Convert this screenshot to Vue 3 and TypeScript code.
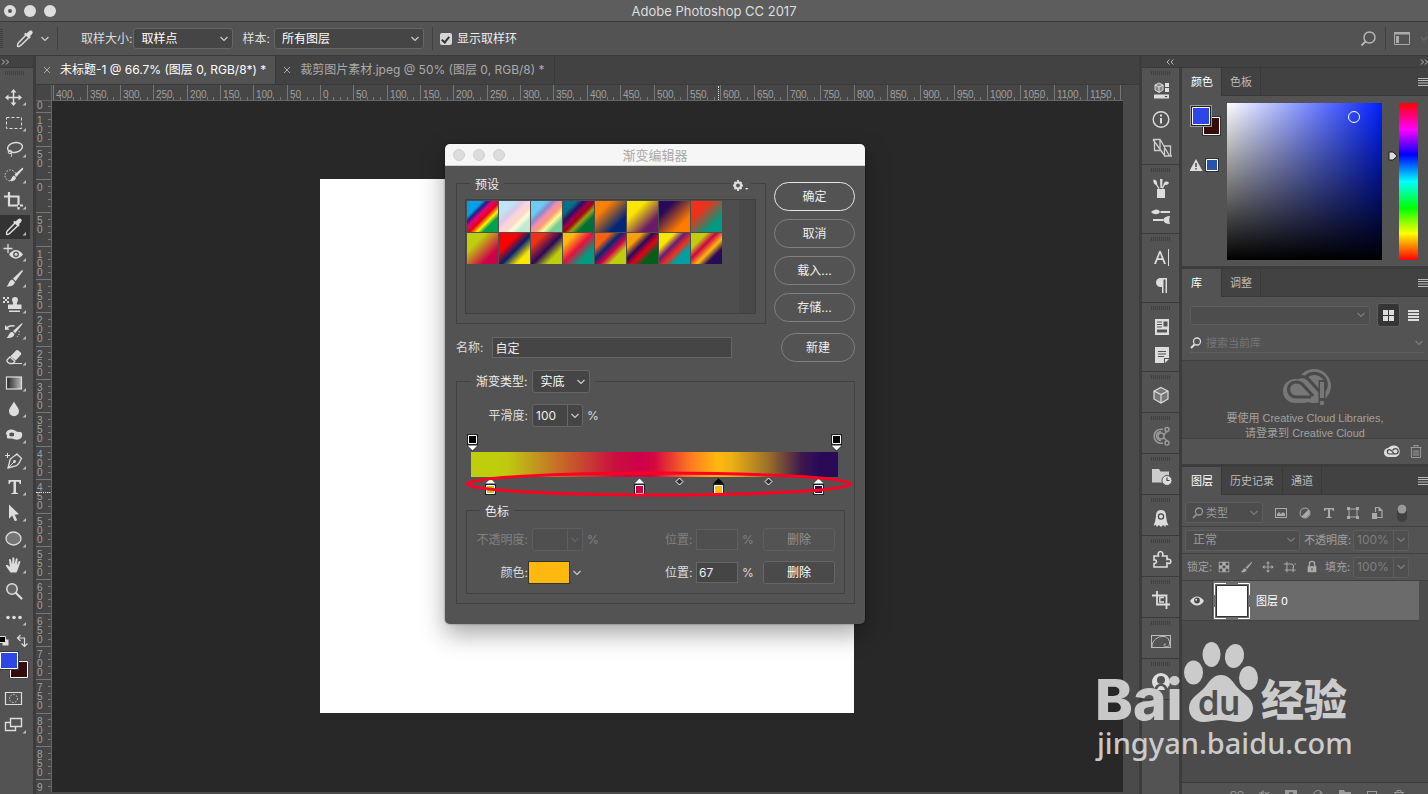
<script setup lang="ts">
import { ref } from 'vue'

interface Tick {
  value: number
  offset: number
  label: string
}

const SCALE = 0.667

function buildTicks(from: number, to: number): Tick[] {
  const ticks: Tick[] = []
  for (let v = from; v <= to; v += 10) {
    ticks.push({
      value: v,
      offset: Math.round(v * SCALE),
      label: v % 50 === 0 ? String(Math.abs(v)) : '',
    })
  }
  return ticks
}

const columns = buildTicks(-400, 1200)
const rows = buildTicks(-150, 920)

const brush =
  '<path d="M21.8 4.2L13 12.6l2.6 2.6 7-9.8c.5-.8-.1-1.7-.8-1.2z" fill="#ddd"/><path d="M12.2 13.4l2.7 2.7c-.4 3-3.700 5-8.500 4.200 2.800-1.500 2-6 5.800-6.900z" fill="#ddd"/>'

const tools: { id: string; name: string; art: string; flyout: boolean }[] = [
  { id: 'move', name: '移动工具', flyout: true, art: '<path d="M13.500 7v13M7 13.500h13" stroke="#ddd" stroke-width="1.500"/><path d="M13.500 5l3 3.500h-6zM13.500 22l3-3.500h-6zM5 13.500l3.500-3v6zM22 13.500l-3.500-3v6z" fill="#ddd"/>' },
  { id: 'marquee', name: '矩形选框工具', flyout: true, art: '<rect x="6.500" y="7.500" width="15" height="11" fill="none" stroke="#ddd" stroke-dasharray="3 2"/>' },
  { id: 'lasso', name: '套索工具', flyout: true, art: '<ellipse cx="15" cy="11.500" rx="7.500" ry="4.800" transform="rotate(-12 15 11.500)" fill="none" stroke="#ddd" stroke-width="1.400"/><circle cx="10" cy="16" r="1.800" fill="none" stroke="#ddd"/><path d="M11 17c1 1 1 2 0 4" fill="none" stroke="#ddd"/>' },
  { id: 'quick', name: '快速选择工具', flyout: true, art: '<circle cx="10.500" cy="13.500" r="5.500" fill="none" stroke="#ddd" stroke-dasharray="1.500 1.500"/><path d="M22 6l-7.500 6.500 2 2.200 6.500-7.500c.5-.8-.3-1.700-1-1.200z" fill="#ddd"/><path d="M14 13.500l2.200 2.400c-1 2.600-3.700 3.500-6.700 2.900 2.500-1.300 2-4.500 4.500-5.300z" fill="#ddd"/>' },
  { id: 'crop', name: '裁剪工具', flyout: true, art: '<path d="M4 8.500h14.500V17M9 4v13.500h9M20 17.500h3M18.500 19v2.500" fill="none" stroke="#ddd" stroke-width="2.200"/>' },
  { id: 'eyedropper', name: '吸管工具', flyout: true, art: '<path d="M15 9l-7.500 7.800c-1 1.100-1.200 2.700-.9 3.500.8.300 2.300 0 3.300-1L17.500 12" fill="none" stroke="#ddd" stroke-width="1.500"/><path d="M13 8l1.700-1.300 1 .8c2-2.300 3.300-3.800 5-2.800s1.200 3.200-1.700 5.300l.8 1-1.600 1.800z" fill="#ddd"/>' },
  { id: 'redeye', name: '红眼工具', flyout: true, art: '<path d="M8 4v9M3.500 8.500h9" stroke="#ddd" stroke-width="1.300"/><path d="M9 14.500c3.500-6 10-6 14 0-4 5.500-10.500 5.500-14 0z" fill="#ddd"/><circle cx="16" cy="14.300" r="2.900" fill="#535353"/><circle cx="16" cy="14.300" r="1.500" fill="#ddd"/>' },
  { id: 'brush', name: '画笔工具', flyout: true, art: brush },
  { id: 'stamp', name: '仿制图章工具', flyout: true, art: '<path d="M3 5h2v2H3zM7 5h2v2H7zM5 7h2v2H5zM3 9h2v2H3zM7 9h2v2H7z" fill="#ddd"/><path d="M12 8a3 3 0 116 0c0 1.600-1.500 2.500-1 4.500h4.500V17H8v-4.500h5c.5-2-1-2.900-1-4.500zM9 18.500h11v1.600H9z" fill="#ddd"/>' },
  { id: 'history', name: '历史记录画笔', flyout: true, art: '<path d="M21.800 5.200L13 13l2.200 2.200 7-8.800c.5-.8.200-1.700-.4-1.200z" fill="#ddd"/><path d="M12.200 13.800l2.300 2.300c-.4 2.800-3.700 4.500-8 3.900 2.500-1.400 2-5.400 5.700-6.200z" fill="#ddd"/><path d="M6 11c2.500-4 6-3.500 8.500-3" fill="none" stroke="#ddd" stroke-width="1.500"/><path d="M5 12V7l4.500 4.500z" fill="#ddd"/><path d="M19 13c1 3-.5 5-3 6.500" fill="none" stroke="#ddd" stroke-dasharray="1.200 1.600"/>' },
  { id: 'eraser', name: '橡皮擦工具', flyout: true, art: '<path d="M7 16l3-3 4.800 4.300-1.800 2.200H9.500c-1.500-.8-3-2-2.500-3.500z" fill="none" stroke="#ddd" stroke-width="1.300"/><path d="M10.500 12.200l5.500-5.700c.8-.7 1.600-.7 2.400 0l2.300 2c.7.700.7 1.600 0 2.400l-5 5.700z" fill="#ddd"/><path d="M11 19.500h11" stroke="#ddd"/>' },
  { id: 'gradient', name: '渐变工具', flyout: true, art: '<defs><linearGradient id="toolGrad"><stop offset="0" stop-color="#222"/><stop offset="1" stop-color="#bbb"/></linearGradient></defs><rect x="6.500" y="7" width="15" height="12" fill="url(#toolGrad)" stroke="#ddd" stroke-width="1.200"/>' },
  { id: 'blur', name: '模糊工具', flyout: true, art: '<path d="M14 5.500c2 4 5 6.500 5 9.700a5 5 0 01-10 0c0-3.200 3-5.700 5-9.700z" fill="#ddd"/>' },
  { id: 'dodge', name: '海绵工具', flyout: true, art: '<path d="M6 12c0-4 5-5.500 9-3.500l2 1.200 4 .3c2 1.500 1.500 5.500-.8 6.800-3 1.700-5.700.7-8.200-.3-2.500-.3-4 .5-5-.8-.7-1 .5-1.500 0-2.500z" fill="#ddd"/><path d="M9.500 12.500a2.300 1.600 0 104.500 0 2.300 1.600 0 10-4.500 0z" fill="#535353"/>' },
  { id: 'pen', name: '钢笔工具', flyout: true, art: '<path d="M7.500 5v5M5 7.500h5" stroke="#ddd"/><path d="M17 6l4.500 4.500c-1.500 1.500-1.300 5.500-5 7.200L8 20l2-8c1.500-3.500 5.500-4 7-6z" fill="none" stroke="#ddd" stroke-width="1.300"/><path d="M8 20l6-6" stroke="#ddd"/><circle cx="14.500" cy="13.500" r="1.400" fill="#ddd"/>' },
  { id: 'type', name: '文字工具', flyout: true, art: '<path d="M8.500 6h12.500v4h-1.200c-.3-1.800-1-2.300-3-2.300h-.8v10c0 1 .5 1.200 2 1.300v1H11.500v-1c1.500-.1 2-.3 2-1.300v-10h-.8c-2 0-2.700.5-3 2.300H8.500z" fill="#ddd"/>' },
  { id: 'path', name: '路径选择工具', flyout: true, art: '<path d="M9 4.500v14.300l3.200-3.200 2.600 5.700 2.400-1.100-2.500-5.500 4.300-.4z" fill="#ddd"/>' },
  { id: 'ellipse', name: '椭圆工具', flyout: true, art: '<ellipse cx="13.500" cy="12.500" rx="7.500" ry="6.500" fill="#767676" stroke="#ddd" stroke-width="1.300"/>' },
  { id: 'hand', name: '抓手工具', flyout: true, art: '<path d="M10.500 20.500L6 14.200c-.6-1 .6-2 1.600-1.200l2.300 2-.9-7c-.1-1.300 1.600-1.500 1.900-.3l1.200 4.800.3-6.200c0-1.300 1.800-1.300 1.900 0l.2 6.200 1.300-5.400c.3-1.200 2-.9 1.800.4l-.7 5.500 1.700-3.500c.6-1.100 2.100-.4 1.700.8l-2.300 6.700c-.5 1.600-1 2.500-1.600 3.500z" fill="#ddd"/>' },
  { id: 'zoom', name: '缩放工具', flyout: false, art: '<circle cx="12" cy="11" r="5.200" fill="#666" stroke="#ddd" stroke-width="1.500"/><path d="M16 15l5.500 5.500" stroke="#ddd" stroke-width="2.200" stroke-linecap="round"/>' },
  { id: 'more', name: '编辑工具栏', flyout: true, art: '<circle cx="8" cy="13.500" r="1.800" fill="#ddd"/><circle cx="14" cy="13.500" r="1.800" fill="#ddd"/><circle cx="20" cy="13.500" r="1.800" fill="#ddd"/>' },
]

const dock: { name: string; art: string }[][] = [
  [
    { name: '属性', art: '<path d="M9 5l4 2v5l-4 2.500L5 12V7z" fill="#888" stroke="#ddd"/><path d="M5 7l4 2 4-2M9 9v5" fill="none" stroke="#ddd"/><path d="M15 5h4v4h-4zM15 10h4v4h-4zM4 16.500h15v4H4z" fill="#ddd"/><path d="M14.500 18h3l-1.500 1.500z" fill="#333"/>' },
    { name: '信息', art: '<circle cx="11" cy="13.500" r="7.800" fill="none" stroke="#ddd" stroke-width="1.400"/><path d="M11 8.500v2M11 12V17.500" stroke="#ddd" stroke-width="2"/>' },
    { name: '仿制源', art: '<path d="M3 5.500h7v11H4.500V6M10.500 6l9 16H22M14.500 12h6v10h-6zM3 5.500l11.500 16" fill="none" stroke="#ccc" stroke-width="1.300"/>' },
  ],
  [
    { name: '画笔预设', art: '<path d="M7 14h8v9H7zM10 4h2.500l-.3 9h-1.800zM3.500 4.500c3 0 4 3 3.700 5l2.500 4-1.200.5-2.500-4C3.500 9 3 7 3.500 4.500zM14 8c1.500-2.500 4-1.500 5-.3-1 2-2.500 2.500-4 2l-2 4-1-.5z" fill="#ddd"/>' },
    { name: '画笔', art: '<path d="M1 9c3-2.500 7-4 9 0-2 3-6 3-9 0zM10.500 8H20v2H10.500zM3 16h10v2H3zM13 17c1.500-3 3.500-4 7-4-1 3-1 5 0 8-3.500 0-5.500-1-7-4z" fill="#ddd"/>' },
  ],
  [
    { name: '字符', art: '<path d="M4 20l5.300-13h1.400L16 20h-2l-1.500-4h-5L6 20zm4.200-5.700h3.600L10 9.500zM18 5h1v17h-1z" fill="#ddd"/>' },
    { name: '段落', art: '<path d="M10 6h7v15h-1.500V7.500H13.500V21H12v-6h-1.500a4.500 4.500 0 010-9z" fill="#ddd"/>' },
  ],
  [
    { name: '动作', art: '<path d="M5 6h14v16H5z" fill="#ddd"/><path d="M7 9h5M7 11.500h5M7 14h5" stroke="#535353"/><path d="M13.500 8.500h4v5h-4zM7 16.500h10v3H7z" fill="#535353"/>' },
    { name: '注释', art: '<path d="M5 6h14v11h-5v5H5z" fill="#ddd"/><path d="M15 22v-4h4z" fill="#ddd"/><path d="M8 10.500h8M8 13h8M8 15.500h6" stroke="#535353"/>' },
  ],
  [{ name: '3D', art: '<path d="M11 5.500l7 3.500v8l-7 4-7-4V9z" fill="#777" stroke="#ddd" stroke-width="1.200"/><path d="M4 9l7 3.500L18 9M11 12.500V21" fill="none" stroke="#ddd" stroke-width="1.200"/>' }],
  [{ name: '共享', art: '<g fill="none" stroke="#9a9a9a" stroke-width="1.500"><path d="M13 6.500a7 7 0 100 13.500"/><circle cx="11" cy="13" r="3"/><path d="M11 8.500a4.500 4.500 0 100 9M13.500 12l4-4M13.500 14.500l4 4"/><circle cx="17" cy="6.500" r="2"/><circle cx="17" cy="20" r="2"/></g>' }],
  [{ name: '文件', art: '<path d="M2 5h7l1.500 2.500H19v11H2z" fill="#ccc"/><circle cx="17" cy="16.500" r="5" fill="#ddd" stroke="#535353"/><path d="M17 13.500v3h2.500" fill="none" stroke="#444" stroke-width="1.200"/>' }],
  [{ name: '图案', art: '<path d="M11 5c4 0 5 3 5 6l1 6 1.500 3.500-2.500-.5-.8 2-2-2-2.200 2-2.200-2-2 2-.8-2-2.500.5L5 17l1-6c0-3 1-6 5-6z" fill="#ddd"/><circle cx="11" cy="11.500" r="2.600" fill="none" stroke="#444" stroke-width="1.200"/>' }],
  [{ name: '扩展', art: '<path d="M4 10h4.500c-1-3 .5-4.500 2-4.500s3 1.500 2 4.500H17v3.500c3-.8 3.800.5 3.800 2s-1 2.500-3.800 1.500V21H4v-3.500c3.500.5 3-4.500 0-3.500z" fill="none" stroke="#ddd" stroke-width="1.600"/>' }],
  [{ name: '裁切', art: '<path d="M2 8.500h14.500V22M7 4v13.500h13" fill="none" stroke="#ddd" stroke-width="1.800"/><path d="M14 10.500H9.800v4.500H14M13.500 12v0" fill="none" stroke="#ddd" stroke-width="1.400"/>' }],
  [{ name: '黄金分割', art: '<rect x="1.500" y="7.500" width="19" height="12" fill="none" stroke="#bbb"/><path d="M2 19C2 12 8 8 14 8.500c5 .5 6.500 6 5 9-1.500 2-5 1.500-5-.5 0-1.200 1.500-1.200 2-.5" fill="none" stroke="#bbb"/>' }],
  [{ name: '用户', art: '<circle cx="11" cy="13" r="9" fill="#ddd"/><circle cx="11" cy="11" r="4" fill="#535353"/><path d="M4.500 20c1-4 3-5 6.500-5s5.500 1 6.500 5l-3 2.500h-7z" fill="#535353"/><path d="M7 21c1-3 2-4 4-4s3 1 4 4z" fill="#ddd"/>' }],
]

const presets: string[] = [
  '#00a0e9 25%, #1d2088 33%, #e4007f 42%, #e60012 54%, #fff100 66%, #00a050 76%',
  '#bfe4f5 25%, #d9c9e6 38%, #fbd3df 48%, #fbd9c5 60%, #fbfbdc 68%, #c3e8d2 80%',
  '#6ccaf5 25%, #8c8ac8 36%, #f48cb5 46%, #f8a070 57%, #fdfa96 68%, #78cc96 80%',
  '#006f87 22%, #2a1060 34%, #9b0050 44%, #a40010 52%, #94a010 62%, #006f38 74%',
  '#ff8000 25%, #002878 75%',
  '#fae600 30%, #6a1a68 75%',
  '#290a59 25%, #ff7c00 75%',
  '#f03018 30%, #009b80 75%',
  '#bece0c 30%, #cf004a 75%',
  '#ff0000 32%, #042070 54%, #fae600 78%',
  '#f03018 22%, #290a59 52%, #bece0c 76%',
  '#ffb80e 20%, #e8103e 48%, #009b80 74%',
  '#fb6010 24%, #042878 42%, #cf004a 58%, #bece0c 74%',
  '#ffa000 24%, #290a59 42%, #e6001a 58%, #00601a 74%',
  '#fae600 25%, #6a1a78 42%, #f03018 58%, #00a0a0 72%',
  '#bece0c 25%, #cf004a 41%, #ffb80e 59%, #290a59 75%',
]

const stops = [
  { x: 34.5, color: '#bece0c', cap: '#fff' },
  { x: 183.5, color: '#cf004a', cap: '#fff' },
  { x: 262.5, color: '#ffb80e', cap: '#000' },
  { x: 362.5, color: '#290a59', cap: '#fff' },
]

const filters: { name: string; art: string }[] = [
  { name: '像素图层', art: '<rect x="2.500" y="3.500" width="11" height="9" fill="none" stroke="#aaa"/><path d="M4 11V9l2-2 2 2 2-2 2 2v2z" fill="#aaa"/>' },
  { name: '调整图层', art: '<circle cx="8" cy="8" r="5" fill="none" stroke="#aaa"/><path d="M4.500 11.500a5 5 0 007-7z" fill="#aaa"/>' },
  { name: '文字图层', art: '<path d="M3 3h10v3h-1c-.2-1-.7-1.500-2-1.500H9V11c0 .8.4 1 1.500 1v1h-5v-1C6.600 12 7 11.800 7 11V4.500H6c-1.300 0-1.800.5-2 1.500H3z" fill="#aaa"/>' },
  { name: '形状图层', art: '<path d="M4 4h8v8H4z" fill="none" stroke="#aaa"/><path d="M2 2h3v3H2zM11 2h3v3h-3zM2 11h3v3H2zM11 11h3v3h-3z" fill="#aaa"/>' },
  { name: '智能对象', art: '<path d="M6.500 7V2.500H10l3 3v7H8" fill="none" stroke="#aaa" stroke-width="1.200"/><path d="M3 8h5v6H3zM9.500 2v4H13z" fill="#aaa"/>' },
]

const locks: { name: string; art: string }[] = [
  { name: '锁定透明像素', art: '<path d="M2 2h12v12H2z" fill="#aaa"/><path d="M3 3h3v3H3zM10 3h3v3h-3zM6.500 6.500h3v3h-3zM3 10h3v3H3zM10 10h3v3h-3z" fill="#4c4c4c"/>' },
  { name: '锁定图像像素', art: '<path d="M14.500 2L7.500 8.500l1.800 1.800L14.800 3c.3-.6 0-1.200-.3-1zM6.800 9.300l1.900 1.900c-.3 2.200-3 3.300-6.700 2.800 2-1.200 2-4 4.800-4.700z" fill="#aaa"/>' },
  { name: '锁定位置', art: '<path d="M8 3v10M3 8h10" stroke="#aaa"/><path d="M8 1.500L10.200 4H5.800zM8 14.500l2.200-2.500H5.800zM1.500 8L4 5.800v4.400zM14.500 8L12 5.800v4.400z" fill="#aaa"/>' },
  { name: '防止嵌套', art: '<path d="M1 4.500h9M4.500 2v12M2 11.500h12.500M11.500 8v6M10 4.500l2 2V9M13 4.500h2" fill="none" stroke="#aaa" stroke-width="1.200"/>' },
  { name: '锁定全部', art: '<path d="M3 7h10v7H3z" fill="#aaa"/><path d="M5 7V4.500a3 3 0 016 0V7" fill="none" stroke="#aaa" stroke-width="1.500"/><path d="M7.500 9h1v3h-1z" fill="#4c4c4c"/>' },
]

const layerActions: { name: string; art: string }[] = [
  { name: '链接图层', art: '<path d="M2 5.500a2.500 2 0 015 0M9 5.500a2.500 2 0 015 0M5 6.500h6" fill="none" stroke="#999" stroke-width="1.200"/>' },
  { name: '图层样式', art: '<path d="M4 10c1 0 1-6 3.500-7.500M3 5h5M9 4l4 5M13 4l-4 5" fill="none" stroke="#999" stroke-width="1.200"/>' },
  { name: '添加蒙版', art: '<path d="M2 2h12v9H2z" fill="#999"/><circle cx="8" cy="6.500" r="2.500" fill="#535353"/>' },
  { name: '新建调整图层', art: '<circle cx="8" cy="7" r="4.500" fill="none" stroke="#999"/><path d="M5 10l6.500-6.500V9L8 11z" fill="#999"/>' },
  { name: '新建组', art: '<path d="M2 2h5l1 2h6v8H2z" fill="#999"/>' },
  { name: '新建图层', art: '<rect x="3.500" y="3.500" width="9" height="9" fill="none" stroke="#999"/>' },
  { name: '删除图层', art: '<path d="M3 4.500h10M6 4V2.500h4V4M4.500 5v8h7V5M6.500 7v5M9.500 7v5" fill="none" stroke="#999"/>' },
]

const gradientName = ref('自定')
const smoothness = ref('100')
const stopPosition = ref('67')
const opacityPosition = ref('')
const stopOpacity = ref('')
const librarySearch = ref('')
const layerOpacity = ref('100%')
const layerFill = ref('100%')
const showRing = ref(true)
</script>

<template>
  <div class="app">
    <header class="titlebar">
      <span class="lights"><i class="light edited"></i><i class="light"></i><i class="light"></i></span>
      <span class="app-title">Adobe Photoshop CC 2017</span>
    </header>

    <div class="options">
      <span class="bar-grip"></span>
      <button class="plain current-tool" aria-label="吸管工具">
        <svg width="22" height="22" viewBox="3 2 22 22" v-html="tools[5].art"></svg>
        <svg class="chev" width="10" height="6" viewBox="0 0 10 6"><path d="M1.500 1L5 4.500 8.500 1" /></svg>
      </button>
      <span class="rule"></span>
      <label class="opt-label first" for="sample-size">取样大小:</label>
      <span class="select size">
        <select id="sample-size"><option>取样点</option></select>
        <svg class="chev" width="10" height="6" viewBox="0 0 10 6"><path d="M1.500 1L5 4.500 8.500 1" /></svg>
      </span>
      <label class="opt-label" for="sample-from">样本:</label>
      <span class="select from">
        <select id="sample-from"><option>所有图层</option></select>
        <svg class="chev" width="10" height="6" viewBox="0 0 10 6"><path d="M1.500 1L5 4.500 8.500 1" /></svg>
      </span>
      <span class="rule ring-rule"></span>
      <label class="ring"><input v-model="showRing" type="checkbox" />显示取样环</label>
      <span class="spacer"></span>
      <button class="plain" aria-label="搜索">
        <svg width="18" height="18" viewBox="0 0 18 18"><circle cx="10.500" cy="7.500" r="5.500" fill="none" stroke="#b8b8b8" stroke-width="1.400" /><path d="M6.500 11.500L2.500 15.500" stroke="#b8b8b8" stroke-width="1.800" /></svg>
      </button>
      <span class="rule end-rule"></span>
      <button class="plain workspace" aria-label="工作区">
        <svg width="34" height="14" viewBox="0 0 34 14"><path d="M.5 1h15v11.500H.5z" fill="none" stroke="#aaa" /><path d="M0 0h16v2.500H0zM2 4h3v7H2z" fill="#aaa" /><path d="M27 5l3 3.500L33 5" fill="none" stroke="#777" /></svg>
      </button>
    </div>

    <div class="work">
      <aside class="toolbar">
        <div class="collapse left"><svg width="8" height="6" viewBox="0 0 8 6"><path d="M1 .5L3.500 3 1 5.500M5 .5L7.500 3 5 5.500" /></svg></div>
        <div class="tool-grip"><span class="grip"></span></div>
        <button v-for="t in tools" :key="t.id" class="tool" :class="{ active: t.id === 'eyedropper' }" :aria-label="t.name">
          <svg width="30" height="26" viewBox="0 0 30 26"><g v-html="t.art"></g><path v-if="t.flyout" d="M26 18v3.500H22.500z" fill="#bbb" /></svg>
        </button>
        <svg class="tool-colors" width="33" height="53" viewBox="0 0 33 53">
          <path d="M2.500 6.500h6v6h-6z" fill="#ddd" />
          <path d="M-.5 3.500h6v6h-6z" fill="#000" stroke="#ddd" />
          <path d="M18 5h6.500v8M20.500 2L17.500 5l3 3M21.500 10.500l3 3 3-3" fill="none" stroke="#ddd" stroke-width="1.200" />
          <path d="M9.500 27.500h19v18h-19z" fill="#3a3a3a" /><path d="M10.500 28.500h17v16h-17z" fill="#350b0b" stroke="#fff" />
          <path d="M-1 18h20v19H-1z" fill="#3a3a3a" /><path d="M.5 19.500h17v16H.5z" fill="#2c46e8" stroke="#fff" />
        </svg>
        <button class="tool" aria-label="快速蒙版"><svg width="30" height="26" viewBox="0 0 30 26"><path d="M5.500 6.500h16v12h-16z" fill="none" stroke="#ddd" stroke-width="1.200" /><circle cx="13.500" cy="12.500" r="4" fill="none" stroke="#ddd" stroke-dasharray="1.500 1.500" /></svg></button>
        <button class="tool" aria-label="屏幕模式"><svg width="30" height="26" viewBox="0 0 30 26"><path d="M5.500 10.500h10v8h-10z" fill="none" stroke="#ddd" stroke-width="1.400" /><path d="M10.500 6.500h11v8h-11z" fill="#535353" stroke="#ddd" stroke-width="1.400" /><path d="M26 18v3.500H22.500z" fill="#bbb" /></svg></button>
      </aside>

      <main class="document">
        <nav class="tabs">
          <button class="doc-tab on"><svg width="8" height="8" viewBox="0 0 8 8"><path d="M1 1l6 6M7 1L1 7" /></svg>未标题-1 @ 66.7% (图层 0, RGB/8*) *</button>
          <button class="doc-tab"><svg width="8" height="8" viewBox="0 0 8 8"><path d="M1 1l6 6M7 1L1 7" /></svg>裁剪图片素材.jpeg @ 50% (图层 0, RGB/8) *</button>
        </nav>
        <div class="view">
          <div class="corner"></div>
          <div class="ruler across">
            <div class="track">
              <span v-for="t in columns" :key="t.value" class="tick" :class="{ major: t.label }" :style="{ left: t.offset + 'px' }">{{ t.label }}</span>
              <span class="cursor" :style="{ left: '398px' }"></span>
            </div>
          </div>
          <div class="scroll-strip"></div>
          <div class="ruler down">
            <div class="track">
              <span v-for="t in rows" :key="t.value" class="tick" :class="{ major: t.label }" :style="{ top: t.offset + 'px' }">
                <b v-for="(d, i) in t.label.split('')" :key="i">{{ d }}</b>
              </span>
              <span class="cursor" :style="{ top: '313px' }"></span>
            </div>
          </div>
          <div class="stage"><div class="canvas"></div></div>
        </div>
        <div class="status"></div>
      </main>

      <aside class="side">
        <div class="side-head">
          <svg class="to-left" width="8" height="6" viewBox="0 0 8 6"><path d="M3.500 .5L1 3l2.500 2.500M7.500 .5L5 3l2.500 2.500" /></svg>
          <svg width="8" height="6" viewBox="0 0 8 6"><path d="M1 .5L3.500 3 1 5.500M5 .5L7.500 3 5 5.500" /></svg>
        </div>
        <div class="side-body">
          <div class="dock">
            <div v-for="(g, i) in dock" :key="i" class="dock-group">
              <span class="grip"></span>
              <button v-for="b in g" :key="b.name" class="plain dock-btn" :aria-label="b.name">
                <svg width="22" height="26" viewBox="0 0 22 26" v-html="b.art"></svg>
              </button>
            </div>
          </div>

          <div class="panels">
            <section class="panel">
              <nav class="ptabs">
                <button class="ptab on">颜色</button><button class="ptab">色板</button>
                <svg class="menu" width="10" height="8" viewBox="0 0 10 8"><path d="M0 .5h10M0 2.500h10M0 5h10M0 7.500h10" /></svg>
              </nav>
              <div class="color-body">
                <svg width="37" height="72" viewBox="0 0 37 72" class="swatches">
                  <path d="M12 13h19v20H12z" fill="#333" /><path d="M13.500 14.500h16v17h-16z" fill="#350b0b" stroke="#fff" />
                  <path d="M0 2h22v22H0z" fill="#999" /><path d="M1 3h20v20H1z" fill="#222" /><path d="M2.500 4.500h17v17h-17z" fill="#2c46e8" stroke="#fff" />
                  <path d="M6 56l6.500 12H-.5z" fill="#ddd" /><path d="M6 60v4M6 65v1.500" stroke="#444" stroke-width="1.500" />
                  <path d="M15 55h14v14H15z" fill="#333" /><path d="M16.500 56.500h11v11h-11z" fill="#2653ab" stroke="#fff" />
                </svg>
                <div class="field"><span class="picker"></span></div>
                <div class="hue"><svg width="10" height="10" viewBox="0 0 10 10"><path d="M1 1h4l4 4-4 4H1z" fill="#ddd" stroke="#222" /></svg></div>
              </div>
            </section>

            <section class="panel">
              <nav class="ptabs">
                <button class="ptab on">库</button><button class="ptab">调整</button>
                <svg class="menu" width="10" height="8" viewBox="0 0 10 8"><path d="M0 .5h10M0 2.500h10M0 5h10M0 7.500h10" /></svg>
              </nav>
              <div class="lib-top">
                <span class="select dim lib-select">
                  <select aria-label="库"><option></option></select>
                  <svg class="chev" width="10" height="6" viewBox="0 0 10 6"><path d="M1.500 1L5 4.500 8.500 1" /></svg>
                </span>
                <button class="plain grid-btn" aria-label="网格视图"><svg width="11" height="11" viewBox="0 0 11 11"><path d="M0 0h5v5H0zM6 0h5v5H6zM0 6h5v5H0zM6 6h5v5H6z" fill="#ddd" /></svg></button>
                <button class="plain list-btn" aria-label="列表视图"><svg width="11" height="11" viewBox="0 0 11 11"><path d="M0 0h11v2H0zM0 3h11v2H0zM0 6h11v2H0zM0 9h11v2H0z" fill="#ddd" /></svg></button>
              </div>
              <div class="lib-search">
                <svg width="12" height="12" viewBox="0 0 12 12"><circle cx="7" cy="4.500" r="3.500" fill="none" stroke="#ddd" stroke-width="1.300" /><path d="M4.500 7.500L1 11" stroke="#ddd" stroke-width="2" /></svg>
                <input v-model="librarySearch" type="text" aria-label="搜索当前库" placeholder="搜索当前库" />
                <svg class="chev faint" width="10" height="6" viewBox="0 0 10 6"><path d="M1.500 1L5 4.500 8.500 1" /></svg>
              </div>
              <div class="lib-message">
                <svg width="48" height="37" viewBox="0 0 48 37">
                  <rect x="0" y="10" width="32" height="24" rx="12" fill="#777" /><circle cx="31" cy="17" r="17" fill="#777" />
                  <path d="M28 28H13a7.500 7.500 0 110-15c4 0 6 1.500 8 4l9 10" fill="none" stroke="#4a4a4a" stroke-width="3.200" />
                  <path d="M15 8.500C21 6 25 9 28 13l10 11M22 9a12 12 0 0121 4c1 5-1 9-5 12" fill="none" stroke="#4a4a4a" stroke-width="3.200" />
                  <path d="M35.500 11h7v26h-7z" fill="#4b4b4b" /><path d="M37 13h4v16h-4z" fill="#777" /><circle cx="39" cy="34" r="2.300" fill="#777" />
                </svg>
                <p>要使用 Creative Cloud Libraries,</p>
                <p>请登录到 Creative Cloud</p>
              </div>
              <div class="lib-foot">
                <svg width="17" height="13" viewBox="0 0 17 13"><path d="M5 12a4.500 4.500 0 01-1-9C6.500 1 8 .5 10.500.5a6 6 0 011.500 11.500z" fill="#ddd" /><path d="M9.500 9H5.500a2.200 2.200 0 110-4.400c1.500 0 2 1 5 4.400h1a2.700 2.700 0 100-5.400c-1.400 0-2.500 1-3 1.800" fill="none" stroke="#444" stroke-width="1.200" /></svg>
                <svg width="12" height="13" viewBox="0 0 12 13"><path d="M.5 2.500h11M4 2.500v-2h4v2M1.500 3v9.500h9V3M4 5v6M6 5v6M8 5v6" fill="none" stroke="#999" /></svg>
              </div>
            </section>

            <section class="panel layers">
              <nav class="ptabs">
                <button class="ptab on">图层</button><button class="ptab">历史记录</button><button class="ptab">通道</button>
                <svg class="menu" width="10" height="8" viewBox="0 0 10 8"><path d="M0 .5h10M0 2.500h10M0 5h10M0 7.500h10" /></svg>
              </nav>
              <div class="lrow filter-row">
                <span class="select dim kind">
                  <svg class="lens" width="12" height="12" viewBox="0 0 12 12"><circle cx="7" cy="4.500" r="3.500" fill="none" stroke="#999" stroke-width="1.300" /><path d="M4.500 7.500L1 11" stroke="#999" stroke-width="1.600" /></svg>
                  <select aria-label="滤镜类型"><option>类型</option></select>
                  <svg class="chev" width="10" height="6" viewBox="0 0 10 6"><path d="M1.500 1L5 4.500 8.500 1" /></svg>
                </span>
                <button v-for="f in filters" :key="f.name" class="plain" :aria-label="f.name"><svg width="16" height="16" viewBox="0 0 16 16" v-html="f.art"></svg></button>
                <button class="plain toggle" aria-label="打开图层过滤"><svg width="10" height="18" viewBox="0 0 10 18"><rect width="10" height="18" rx="5" fill="#404040" /><circle cx="5" cy="5" r="4.500" fill="#999" /></svg></button>
              </div>
              <div class="lrow">
                <span class="select dim blend">
                  <select aria-label="混合模式"><option>正常</option></select>
                  <svg class="chev" width="10" height="6" viewBox="0 0 10 6"><path d="M1.500 1L5 4.500 8.500 1" /></svg>
                </span>
                <label class="dim-label" for="layer-opacity">不透明度:</label>
                <span class="combo dim"><input id="layer-opacity" v-model="layerOpacity" type="text" disabled /><button disabled aria-label="不透明度滑块"><svg class="chev" width="10" height="6" viewBox="0 0 10 6"><path d="M1.500 1L5 4.500 8.500 1" /></svg></button></span>
              </div>
              <div class="lrow">
                <span class="dim-label lock-label">锁定:</span>
                <span class="locks"><button v-for="l in locks" :key="l.name" class="plain" :aria-label="l.name"><svg width="14" height="14" viewBox="0 0 16 16" v-html="l.art"></svg></button></span>
                <label class="dim-label" for="layer-fill">填充:</label>
                <span class="combo dim"><input id="layer-fill" v-model="layerFill" type="text" disabled /><button disabled aria-label="填充滑块"><svg class="chev" width="10" height="6" viewBox="0 0 10 6"><path d="M1.500 1L5 4.500 8.500 1" /></svg></button></span>
              </div>
              <div class="layer-list">
                <div class="layer">
                  <button class="plain eye" aria-label="图层可见性"><svg width="14" height="10" viewBox="0 0 14 10"><path d="M0 5c4-6 10-6 14 0-4 6-10 6-14 0z" fill="#ddd" /><circle cx="7" cy="4.500" r="2.900" fill="#4a4a4a" /><circle cx="6.200" cy="3.800" r="1" fill="#ddd" /></svg></button>
                  <div class="layer-main">
                    <svg width="36" height="36" viewBox="0 0 36 36"><path d="M2.500 2.500h31v31h-31z" fill="#fff" stroke="#333" /><path d="M.5 12V.5H12M24 .5h11.500V12M35.500 24v11.500H24M12 35.500H.5V24" fill="none" stroke="#fff" /></svg>
                    图层 0
                  </div>
                </div>
              </div>
              <div class="layer-foot"><button v-for="a in layerActions" :key="a.name" class="plain" :aria-label="a.name"><svg width="16" height="14" viewBox="0 0 16 14" v-html="a.art"></svg></button></div>
            </section>
          </div>
        </div>
      </aside>
    </div>

    <div class="dialog" role="dialog" aria-labelledby="dialog-title">
      <div class="dialog-bar">
        <span class="lights"><i class="light"></i><i class="light"></i><i class="light"></i></span>
        <span id="dialog-title" class="dialog-title">渐变编辑器</span>
      </div>
      <div class="dialog-body">
        <div class="top">
          <fieldset class="presets">
            <legend>预设</legend>
            <button class="plain gear" aria-label="预设选项">
              <svg width="16" height="12" viewBox="0 0 16 12"><circle cx="5" cy="5.500" r="3" fill="none" stroke="#ddd" stroke-width="2.200" /><g stroke="#ddd" stroke-width="2"><path d="M5 0v2.500M5 8.500V11M0 5.500h2M8 5.500h2M1.500 2l1.500 1.500M7 7.500L8.500 9M8.500 2L7 3.500M3 7.500L1.500 9" /></g><path d="M12 8h3.500l-1.700 2z" fill="#ddd" /></svg>
            </button>
            <div class="preset-list">
              <div class="preset-grid"><button v-for="(p, i) in presets" :key="i" class="preset" :aria-label="'预设 ' + (i + 1)" :style="{ backgroundImage: 'linear-gradient(135deg, ' + p + ')' }"></button></div>
              <div class="preset-scroll"></div>
            </div>
          </fieldset>
          <div class="actions">
            <button class="pill main">确定</button><button class="pill">取消</button><button class="pill">载入...</button><button class="pill">存储...</button>
          </div>
        </div>
        <div class="name-row">
          <label for="grad-name">名称:</label>
          <input id="grad-name" v-model="gradientName" class="box" type="text" />
          <button class="pill new">新建</button>
        </div>
        <fieldset class="kind-set">
          <legend>
            <label for="grad-kind">渐变类型:</label>
            <span class="select grad-kind">
              <select id="grad-kind"><option>实底</option></select>
              <svg class="chev" width="10" height="6" viewBox="0 0 10 6"><path d="M1.500 1L5 4.500 8.500 1" /></svg>
            </span>
          </legend>
          <div class="smooth-row">
            <label for="smooth">平滑度:</label>
            <span class="combo"><input id="smooth" v-model="smoothness" type="text" /><button aria-label="平滑度滑块"><svg class="chev" width="10" height="6" viewBox="0 0 10 6"><path d="M1.500 1L5 4.500 8.500 1" /></svg></button></span>
            <span>%</span>
          </div>
          <svg class="editor" width="398" height="75" viewBox="0 1 398 75" role="img" aria-label="渐变条">
            <defs>
              <linearGradient id="ramp">
                <stop offset="0.060" stop-color="#bece0c" /><stop offset="0.100" stop-color="#bfc90f" /><stop offset="0.250" stop-color="#c66628" /><stop offset="0.390" stop-color="#c9103f" />
                <stop offset="0.460" stop-color="#cf004a" /><stop offset="0.500" stop-color="#d4083f" /><stop offset="0.600" stop-color="#ff7c20" /><stop offset="0.670" stop-color="#ffb80e" /><stop offset="0.710" stop-color="#efb013" />
                <stop offset="0.810" stop-color="#9a7028" /><stop offset="0.900" stop-color="#3f184c" /><stop offset="0.950" stop-color="#290a59" />
              </linearGradient>
            </defs>
            <rect x="15" y="26" width="367" height="25" fill="url(#ramp)" />
            <g v-for="x in [16.5, 380.5]" :key="x">
              <path :d="`M${x - 5.5} 8h11v11.500l-5.500 6-5.500-6z`" fill="#222" />
              <path :d="`M${x - 4} 9.500h8v8h-8z`" fill="#000" stroke="#fff" />
              <path :d="`M${x - 5} 19.500h10l-5 5z`" fill="#fff" />
            </g>
            <g v-for="s in stops" :key="s.x">
              <path :d="`M${s.x - 5.5} 58l5.500-6 5.500 6v11h-11z`" fill="#222" />
              <path :d="`M${s.x - 5} 57.500l5-5 5 5z`" :fill="s.cap" />
              <path :d="`M${s.x - 4} 59.500h8v8h-8z`" :fill="s.color" stroke="#fff" />
            </g>
            <path v-for="x in [223.5, 312.5]" :key="x" :d="`M${x} 52l3.500 3.500-3.500 3.500-3.500-3.500z`" fill="#333" stroke="#fff" />
            <ellipse cx="203" cy="58" rx="192" ry="11" fill="none" stroke="#ff0022" stroke-width="3" />
          </svg>
          <fieldset class="stop-set">
            <legend>色标</legend>
            <div class="stop-row off">
              <label for="stop-opacity">不透明度:</label>
              <span class="combo dim"><input id="stop-opacity" v-model="stopOpacity" type="text" disabled /><button disabled aria-label="不透明度滑块"><svg class="chev" width="10" height="6" viewBox="0 0 10 6"><path d="M1.500 1L5 4.500 8.500 1" /></svg></button></span>
              <span>%</span>
              <label for="opacity-pos">位置:</label>
              <input id="opacity-pos" v-model="opacityPosition" class="box" type="text" disabled />
              <span>%</span>
              <button class="del" disabled>删除</button>
            </div>
            <div class="stop-row">
              <span class="row-label">颜色:</span>
              <button class="swatch" aria-label="色标颜色"></button>
              <svg class="chev color-chev" width="10" height="6" viewBox="0 0 10 6"><path d="M1.500 1L5 4.500 8.500 1" /></svg>
              <label for="stop-pos">位置:</label>
              <input id="stop-pos" v-model="stopPosition" class="box" type="text" />
              <span>%</span>
              <button class="del">删除</button>
            </div>
          </fieldset>
        </fieldset>
      </div>
    </div>

    <svg class="watermark" width="270" height="130" viewBox="0 0 270 130" role="img" aria-label="Baidu 经验 jingyan.baidu.com">
      <g fill="#d6d6d6">
        <ellipse cx="108.500" cy="30.500" rx="9.500" ry="12" /><ellipse cx="126.500" cy="12.500" rx="9" ry="12.500" /><ellipse cx="149.500" cy="14" rx="9.500" ry="12" transform="rotate(12 149.500 14)" /><ellipse cx="163.500" cy="36" rx="9.500" ry="12" />
        <path d="M136 33c8 0 11 6 16 12s16 11 16 21c0 9-7 14-14 14-6 0-12-2-18-2s-12 2-18 2c-7 0-14-5-14-14 0-10 11-15 16-21s8-12 16-12z" />
        <text x="10" y="78" class="wm-bai">Bai</text>
        <text x="176" y="74" class="wm-cjk">经验</text>
        <text x="12" y="112" class="wm-url">jingyan.baidu.com</text>
      </g>
      <text x="113" y="73" class="wm-du">du</text>
    </svg>
  </div>
</template>

<style>
body {
  margin: 0;
  background: #535353;
}
</style>

<style scoped>
.app,
.app * {
  box-sizing: border-box;
}
.app {
  position: relative;
  display: flex;
  flex-direction: column;
  height: 100vh;
  overflow: hidden;
  background: #535353;
  color: #ddd;
  font-family: Inter, "Noto Sans CJK SC", sans-serif;
  font-size: 12px;
  line-height: 16px;
}
button,
input,
select {
  margin: 0;
  padding: 0;
  font: inherit;
  color: inherit;
  border-radius: 0;
}
svg {
  display: block;
  flex: none;
}
.plain {
  display: flex;
  align-items: center;
  justify-content: center;
  border: 0;
  background: none;
}
.chev {
  fill: none;
  stroke: #ccc;
  stroke-width: 1.2;
}
.faint,
.dim .chev {
  stroke: #7c7c7c;
}
.spacer {
  flex: 1;
}

.titlebar {
  flex: none;
  display: grid;
  grid-template-columns: 1fr auto 1fr;
  align-items: center;
  height: 22px;
  background: #5d5d5d;
  border-bottom: 1px solid #3a3a3a;
}
.lights {
  display: flex;
  gap: 8px;
  padding-left: 4px;
}
.light {
  width: 12px;
  height: 12px;
  border-radius: 6px;
  background: #dedede;
}
.edited {
  border: 4px solid #dedede;
  background: #555;
}
.app-title {
  padding-top: 1px;
  font-size: 13px;
}

.options {
  flex: none;
  display: flex;
  align-items: center;
  height: 34px;
  border-bottom: 1px solid #3a3a3a;
}
.bar-grip {
  width: 3px;
  height: 19px;
  background: repeating-linear-gradient(#3d3d3d 0 1px, #535353 1px 2px);
}
.current-tool {
  width: 54px;
  gap: 4px;
  padding-left: 4px;
}
.rule {
  width: 1px;
  height: 23px;
  background: #404040;
}
.opt-label {
  margin: 0 4px 0 9px;
}
.opt-label.first {
  margin: 0 1px 0 23px;
}
.select {
  position: relative;
  display: inline-flex;
  align-items: center;
  height: 21px;
  border: 1px solid #666;
  border-radius: 3px;
  background: #454545;
  color: #fff;
}
.select select {
  width: 100%;
  height: 100%;
  padding: 0 20px 0 7px;
  border: 0;
  background: none;
  appearance: none;
}
.select .chev {
  position: absolute;
  right: 3px;
  pointer-events: none;
}
.select.dim {
  color: #999;
  background: #4d4d4d;
  border-color: #5e5e5e;
}
.size {
  width: 100px;
}
.from {
  width: 150px;
}
.ring-rule {
  margin: 0 7px 0 8px;
}
.ring {
  display: flex;
  align-items: center;
  gap: 5px;
  color: #eee;
}
.ring input {
  display: grid;
  place-items: center;
  width: 12px;
  height: 12px;
  border-radius: 2px;
  background: #d6d6d6;
  appearance: none;
}
.ring input:checked::after {
  content: "";
  width: 3px;
  height: 6px;
  border: solid #333;
  border-width: 0 2px 2px 0;
  rotate: 40deg;
}
.end-rule {
  margin: 0 8px;
}
.workspace {
  width: 34px;
}

.work {
  flex: 1;
  display: flex;
  min-height: 0;
}
.grip {
  display: block;
  width: 19px;
  height: 4px;
  background: repeating-linear-gradient(90deg, #404040 0 1px, #535353 1px 2px);
}
.collapse {
  display: flex;
  align-items: center;
  height: 12px;
  padding-left: 1px;
  background: #424242;
  border-bottom: 1px solid #3a3a3a;
}
.collapse svg,
.side-head svg {
  fill: none;
  stroke: #bbb;
}
.toolbar {
  flex: none;
  width: 36px;
  border-right: 3px solid #3c3c3c;
}
.tool-grip {
  height: 16px;
  padding: 3px 0 0 5px;
}
.tool {
  display: block;
  width: 30px;
  height: 26px;
  border: 0;
  background: none;
}
.tool.active {
  background: linear-gradient(#333, #333) 0 1px / 30px 24px no-repeat;
}
.tool-colors {
  margin-top: 3px;
}

.document {
  flex: 1;
  display: flex;
  flex-direction: column;
  min-width: 0;
}
.tabs {
  flex: none;
  display: flex;
  height: 29px;
  background: #424242;
  border-bottom: 1px solid #3a3a3a;
}
.doc-tab {
  display: flex;
  align-items: center;
  gap: 9px;
  padding: 0 9px 0 7px;
  border: 0;
  border-right: 1px solid #383838;
  background: none;
  color: #aaa;
  white-space: nowrap;
}
.doc-tab.on {
  background: #535353;
  color: #fff;
}
.doc-tab svg {
  fill: none;
  stroke: #aaa;
}
.view {
  flex: 1;
  display: grid;
  grid-template-columns: 16px 1fr 16px;
  grid-template-rows: 16px 1fr;
  min-height: 0;
}
.corner {
  border-right: 1px solid #666;
  border-bottom: 1px solid #666;
  background: #464646;
}
.ruler {
  display: flex;
  overflow: hidden;
  justify-content: center;
  background: #464646;
  color: #a0a0a0;
  font: 10px/11px "Liberation Sans", sans-serif;
}
.across {
  border-bottom: 1px solid #666;
}
.down {
  flex-direction: column;
  border-right: 1px solid #666;
}
.track {
  position: relative;
  flex: none;
}
.across .track {
  width: 535px;
}
.down .track {
  height: 535px;
}
.tick {
  position: absolute;
}
.across .tick {
  bottom: 0;
  height: 3px;
  border-left: 1px solid #777;
}
.across .major {
  height: 15px;
  padding: 4px 0 0 2px;
}
.down .tick {
  right: 0;
  width: 3px;
  border-top: 1px solid #777;
}
.down .major {
  width: 15px;
  padding: 3px 0 0 1px;
}
.down b {
  display: block;
  font-weight: 400;
  line-height: 9px;
}
.cursor {
  position: absolute;
}
.across .cursor {
  top: 1px;
  height: 14px;
  border-left: 1px dotted #ddd;
}
.down .cursor {
  right: 1px;
  width: 14px;
  border-top: 1px dotted #ddd;
}
.scroll-strip {
  grid-row: 1 / 3;
  grid-column: 3;
  background: #4a4a4a;
}
.stage {
  display: flex;
  align-items: center;
  justify-content: center;
  padding: 0 1px 1px 0;
  overflow: hidden;
  background: #282828;
}
.canvas {
  flex: none;
  width: 534px;
  height: 534px;
  background: #fff;
}
.status {
  flex: none;
  height: 2px;
  background: #4a4a4a;
}

.side {
  flex: none;
  display: flex;
  flex-direction: column;
  width: 289px;
  border-left: 3px solid #3c3c3c;
}
.side-head {
  flex: none;
  display: flex;
  align-items: center;
  justify-content: space-between;
  height: 12px;
  padding-left: 24px;
  background: #424242;
  border-bottom: 1px solid #3a3a3a;
}
.side-body {
  flex: 1;
  display: flex;
  min-height: 0;
}
.dock {
  flex: none;
  width: 40px;
  border-right: 3px solid #3c3c3c;
}
.dock-group {
  padding: 3px 0;
  border-bottom: 1px solid #3a3a3a;
}
.dock-group .grip {
  margin: 0 0 2px 9px;
}
.dock-btn {
  width: 37px;
  height: 28px;
}
.panels {
  flex: 1;
  display: flex;
  flex-direction: column;
  min-width: 0;
}
.panel {
  flex: none;
  border-bottom: 3px solid #3c3c3c;
}
.ptabs {
  display: flex;
  align-items: center;
  height: 28px;
  background: #424242;
  box-shadow: inset 0 -1px #3a3a3a;
}
.ptab {
  height: 28px;
  padding: 0 8px;
  border: 0;
  border-right: 1px solid #383838;
  background: none;
  color: #bbb;
  font-size: 11px;
}
.ptab.on {
  min-width: 40px;
  padding: 0 8px 0 9px;
  background: #535353;
  color: #fff;
  text-align: left;
}
.menu {
  margin-left: auto;
  fill: none;
  stroke: #bbb;
}
.color-body {
  display: flex;
  height: 170px;
  padding: 7px 10px 6px 8px;
}
.field {
  position: relative;
  flex: 1;
  background: linear-gradient(transparent, #000), linear-gradient(90deg, #fff, #0020ff);
}
.picker {
  position: absolute;
  left: 78%;
  top: 5%;
  width: 12px;
  height: 12px;
  border: 1px solid #fff;
  border-radius: 6px;
}
.hue {
  position: relative;
  width: 19px;
  margin-left: 17px;
  background: linear-gradient(#f00, #f0f 17%, #00f 33%, #0ff 50%, #0f0 67%, #ff0 83%, #f00);
}
.hue svg {
  position: absolute;
  right: 20px;
  top: 48px;
}
.lib-top {
  display: flex;
  align-items: center;
  height: 37px;
  padding: 0 9px 1px 8px;
}
.lib-select {
  flex: 1;
  height: 19px;
}
.grid-btn {
  width: 23px;
  height: 24px;
  margin: 0 8px 0 7px;
  border: 1px solid #5e5e5e;
  border-radius: 3px;
  background: #353535;
}
.lib-search {
  display: flex;
  align-items: center;
  height: 19px;
  margin: 0 4px 7px 8px;
  border-bottom: 1px solid #5e5e5e;
}
.lib-search input {
  flex: 1;
  min-width: 0;
  margin-left: 4px;
  border: 0;
  background: none;
  font-size: 11px;
}
.lib-search input::placeholder {
  color: #757575;
}
.lib-message {
  display: flex;
  flex-direction: column;
  align-items: center;
  height: 78px;
  padding-top: 8px;
  background: #4b4b4b;
  border-top: 1px solid #414141;
  overflow: hidden;
  color: #a0a0a0;
  font: 11px/15px "Liberation Sans", "Noto Sans CJK SC", sans-serif;
}
.lib-message svg {
  margin-bottom: 5px;
  margin-left: 4px;
}
.lib-message p {
  margin: 0;
}
.lib-foot {
  display: flex;
  align-items: center;
  justify-content: flex-end;
  gap: 9px;
  height: 26px;
  padding-right: 6px;
  border-top: 1px solid #414141;
}
.layers {
  flex: 1;
  display: flex;
  flex-direction: column;
  min-height: 0;
  border-bottom: 0;
}
.layers .ptabs {
  flex: none;
}
.lrow {
  flex: none;
  display: flex;
  align-items: center;
  height: 27px;
  padding-left: 3px;
  border-top: 1px solid #414141;
}
.filter-row {
  height: 31px;
  gap: 8px;
  padding-top: 4px;
  border-top: 0;
}
.kind {
  width: 78px;
  margin-right: 2px;
  font-size: 11px;
}
.kind .lens {
  margin-left: 6px;
}
.kind select {
  padding: 0 0 0 2px;
}
.toggle {
  margin-left: 4px;
}
.blend {
  width: 115px;
  margin-right: 4px;
}
.dim-label {
  width: 49px;
  color: #a0a0a0;
  font-size: 11px;
  white-space: nowrap;
}
.lock-label {
  width: 32px;
  padding-left: 2px;
}
.locks {
  display: flex;
  flex: none;
  gap: 8px;
  margin-right: 6px;
}
.locks + .dim-label {
  width: 28px;
}
.combo {
  display: inline-flex;
  flex: none;
  height: 23px;
  border: 1px solid #666;
  border-radius: 3px;
  background: #454545;
  color: #eee;
}
.combo input {
  width: 34px;
  border: 0;
  padding-left: 3px;
  background: none;
}
.combo button {
  display: grid;
  place-items: center;
  width: 15px;
  border: 0;
  border-left: 1px solid #666;
  background: none;
}
.combo.dim {
  border-color: #5e5e5e;
  background: #4f4f4f;
  color: #808080;
}
.combo.dim button {
  border-left-color: #5e5e5e;
}
.lrow .combo {
  height: 21px;
}
.lrow .combo input {
  width: 39px;
}
.layer-list {
  flex: 1;
  min-height: 0;
  background: #4b4b4b;
  border-top: 1px solid #414141;
}
.layer {
  display: flex;
  height: 40px;
  margin-right: 9px;
  border-bottom: 1px solid #414141;
}
.eye {
  width: 31px;
  background: #535353;
  border-right: 1px solid #444;
}
.layer-main {
  flex: 1;
  display: flex;
  align-items: center;
  gap: 6px;
  padding-left: 1px;
  background: #6b6b6b;
  color: #fff;
  font-size: 11px;
}
.layer-foot {
  flex: none;
  display: flex;
  justify-content: center;
  gap: 11px;
  height: 12px;
  padding: 5px 0 0 26px;
  overflow: hidden;
  border-top: 1px solid #3a3a3a;
}
.layer-foot .plain {
  align-items: flex-start;
}

.dialog {
  position: absolute;
  left: 445px;
  top: 144px;
  width: 420px;
  border-radius: 5px;
  background: #535353;
  box-shadow: 0 10px 24px rgba(0, 0, 0, 0.35), 0 0 2px rgba(0, 0, 0, 0.5);
  overflow: hidden;
}
.dialog-bar {
  display: grid;
  grid-template-columns: 1fr auto 1fr;
  align-items: center;
  height: 22px;
  background: #f6f6f6;
  border-bottom: 1px solid #d0d0d0;
  color: #aaa;
}
.dialog-bar .lights {
  padding-left: 8px;
}
.dialog-bar .light {
  border: 1px solid #d0d0d0;
  background: #dcdcdc;
}
.dialog-title {
  font-size: 13px;
}
.dialog-body {
  padding: 9px 10px 20px 11px;
}
.top {
  display: flex;
  justify-content: space-between;
}
fieldset {
  position: relative;
  margin: 0;
  border: 1px solid #424242;
  min-width: 0;
}
legend {
  margin-left: 5px;
  padding: 0 5px;
  height: 17px;
  color: #eee;
  line-height: 20px;
}
.presets {
  width: 310px;
  padding: 7px 9px 9px 8px;
}
.gear {
  position: absolute;
  right: 14px;
  top: -13px;
  width: 20px;
  height: 14px;
  background: #535353;
}
.preset-list {
  display: flex;
  height: 115px;
  border: 1px solid #3f3f3f;
  background: #4e4e4e;
}
.preset-grid {
  flex: 1;
  display: grid;
  grid-template-columns: repeat(8, 31px);
  grid-auto-rows: 31px;
  gap: 1px;
  padding: 1px;
}
.preset {
  border: 0;
}
.preset-scroll {
  width: 16px;
  background: #494949;
}
.actions {
  display: flex;
  flex-direction: column;
  gap: 8px;
  padding-top: 7px;
}
.pill {
  width: 81px;
  height: 29px;
  padding-top: 1px;
  border: 1px solid #808080;
  border-radius: 15px;
  background: none;
  color: #eee;
}
.pill.main {
  border-color: #e6e6e6;
}
.pill.new {
  width: 74px;
  margin-left: auto;
}
.name-row {
  display: flex;
  align-items: center;
  gap: 9px;
  margin: 9px 0 8px;
}
.name-row label {
  padding-top: 1px;
}
.box {
  height: 21px;
  border: 1px solid #666;
  background: #454545;
  padding-left: 2px;
  color: #eee;
}
.name-row .box {
  width: 240px;
}
.kind-set {
  padding: 11px 9px 9px;
}
.kind-set > legend {
  display: flex;
  align-items: center;
  gap: 5px;
  height: 23px;
  line-height: 16px;
}
.grad-kind {
  width: 58px;
  height: 23px;
}
.smooth-row {
  display: grid;
  grid-template-columns: 62px 51px auto;
  align-items: center;
  gap: 4px;
}
.smooth-row label,
.stop-row label,
.row-label {
  text-align: right;
  white-space: nowrap;
}
.editor {
  margin: 0 -9px 0 -10px;
}
.stop-set {
  padding: 9px 0 9px;
}
.stop-set legend {
  margin-left: 13px;
}
.stop-row {
  display: grid;
  grid-template-columns: 61px 51px 74px 27px 42px 17px 72px;
  align-items: center;
  gap: 4px;
}
.stop-row + .stop-row {
  margin-top: 10px;
}
.off {
  color: #808080;
}
.off .chev {
  stroke: #666;
}
.off .box {
  border-color: #5e5e5e;
  background: #4f4f4f;
}
.del {
  height: 23px;
  padding-top: 1px;
  border: 1px solid #666;
  border-radius: 3px;
  background: #4a4a4a;
  color: #fff;
}
.del:disabled {
  background: none;
  border-color: #5e5e5e;
  color: #909090;
}
.swatch {
  width: 42px;
  height: 23px;
  margin-left: -4px;
  border: 1px solid #333;
  background: #ffb80e;
}
.color-chev {
  margin-left: -15px;
}

.watermark {
  position: absolute;
  right: 73px;
  bottom: 22px;
  opacity: 0.92;
}
.wm-bai {
  font: 800 57px/1 Inter, sans-serif;
}
.wm-du {
  fill: #505050;
  font: 600 34px/1 Inter, sans-serif;
}
.wm-cjk {
  font: 900 43px/1 "Noto Sans CJK SC", sans-serif;
}
.wm-url {
  font: 500 29px/1 "Noto Sans", sans-serif;
}
</style>
